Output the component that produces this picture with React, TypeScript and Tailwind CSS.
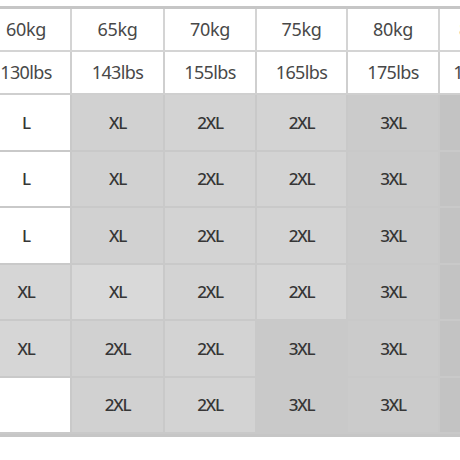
import React from 'react'

const kg = ['60kg', '65kg', '70kg', '75kg', '80kg', '85kg']
const lbs = ['130lbs', '143lbs', '155lbs', '165lbs', '175lbs', '185lbs']

type Cell = { t: string; bg: string }

const W = 'bg-white'
const G0 = 'bg-[#d6d6d6]'
const G1 = 'bg-[#d1d1d1]'
const G2 = 'bg-[#d3d3d3]'
const G3 = 'bg-[#cbcbcb]'
const G4 = 'bg-[#c3c3c3]'

const rows: Cell[][] = [
  [{ t: 'L', bg: W }, { t: 'XL', bg: G1 }, { t: '2XL', bg: G2 }, { t: '2XL', bg: G2 }, { t: '3XL', bg: G3 }, { t: '3XL', bg: G4 }],
  [{ t: 'L', bg: W }, { t: 'XL', bg: G1 }, { t: '2XL', bg: G2 }, { t: '2XL', bg: G2 }, { t: '3XL', bg: G3 }, { t: '3XL', bg: G4 }],
  [{ t: 'L', bg: W }, { t: 'XL', bg: G1 }, { t: '2XL', bg: G2 }, { t: '2XL', bg: G2 }, { t: '3XL', bg: G3 }, { t: '3XL', bg: G4 }],
  [{ t: 'XL', bg: G0 }, { t: 'XL', bg: 'bg-[#d9d9d9]' }, { t: '2XL', bg: G2 }, { t: '2XL', bg: 'bg-[#d5d5d5]' }, { t: '3XL', bg: G3 }, { t: '3XL', bg: G4 }],
  [{ t: 'XL', bg: G0 }, { t: '2XL', bg: G1 }, { t: '2XL', bg: G2 }, { t: '3XL', bg: 'bg-[#c9c9c9]' }, { t: '3XL', bg: G3 }, { t: '4XL', bg: G4 }],
  [{ t: '', bg: W }, { t: '2XL', bg: G1 }, { t: '2XL', bg: G2 }, { t: '3XL', bg: 'bg-[#c9c9c9]' }, { t: '3XL', bg: G3 }, { t: '4XL', bg: G4 }],
]

const App = () => {
  return (
    <div className="h-[460px] w-[460px] overflow-hidden bg-white pt-[6px] font-['Noto_Sans','Liberation_Sans',sans-serif]">
      <div className="ml-[-18px] w-[540px] border-y-[3px] border-[#c6c6c6]">
        <div className="grid grid-cols-[90px_93px_92px_91px_92px_80px]">
          {kg.map((k) => (
            <div
              key={k}
              className="flex h-[43px] items-center justify-center border-r-2 border-b-2 border-[#d4d4d4] bg-white text-[18px] tracking-[-0.3px] text-[#484848]"
            >
              {k}
            </div>
          ))}
          {lbs.map((l) => (
            <div
              key={l}
              className="flex h-[43px] items-center justify-center border-r-2 border-b-2 border-[#cfcfcf] bg-white text-[18px] tracking-[-0.6px] text-[#484848]"
            >
              {l}
            </div>
          ))}
          {rows.map((row, i) =>
            row.map((c, j) => (
              <div
                key={i + '-' + j}
                className={`${c.bg} flex h-[56.5px] items-center justify-center border-r-2 border-b-2 border-[#c9c9c9] text-[17px] font-medium tracking-[-1.2px] text-[#363636]`}
              >
                {c.t}
              </div>
            ))
          )}
        </div>
      </div>
    </div>
  )
}

export default App
